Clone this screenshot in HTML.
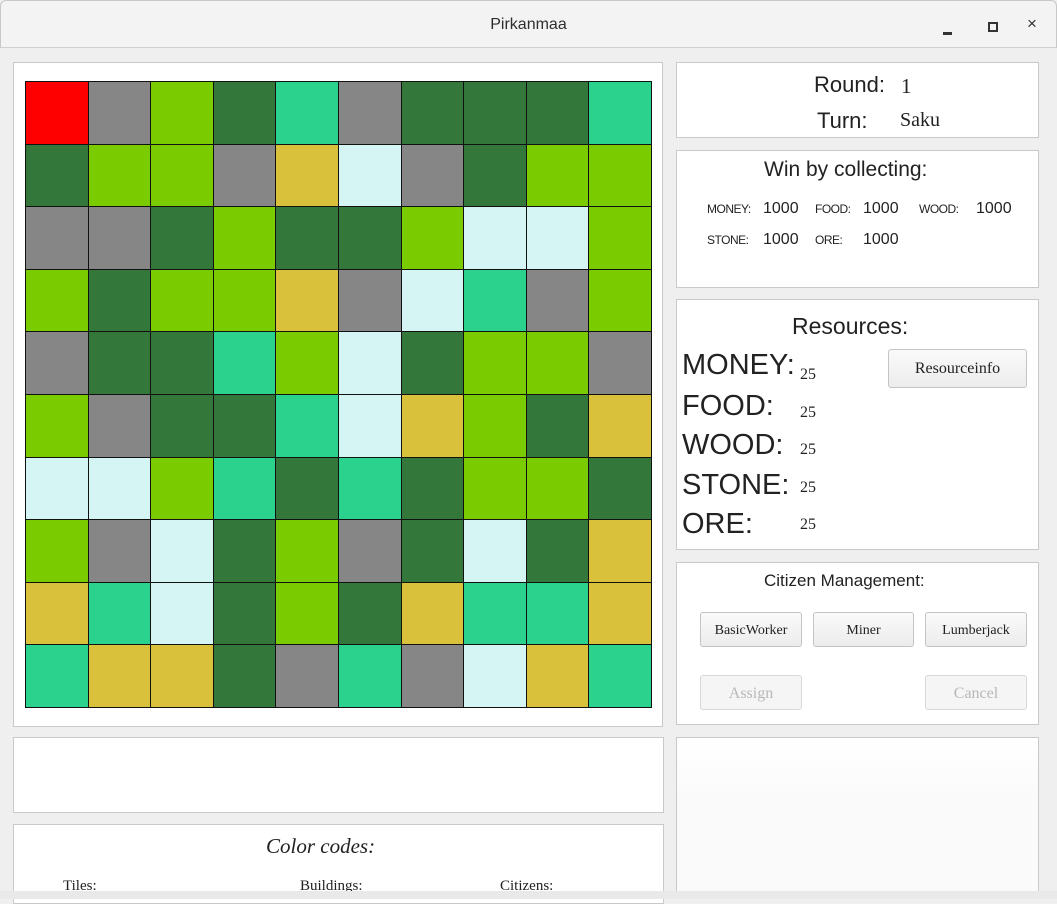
<!DOCTYPE html>
<html><head><meta charset="utf-8"><style>
*{margin:0;padding:0;box-sizing:border-box}
body{width:1057px;height:899px;background:#efefef;position:relative;overflow:hidden;font-family:"Liberation Sans",sans-serif;color:#222}
.title{position:absolute;left:0;top:0;width:1057px;height:48px;background:#f3f3f3;border:1px solid #c8c8c8;border-radius:6px 6px 0 0;border-bottom:1px solid #cfcfcf}
.title .t{position:absolute;left:0;right:0;top:15px;text-align:center;font-size:16px;color:#2e2e2e}
.p{position:absolute;background:#fff;border:1px solid #c9c9c9}
.a{position:absolute;white-space:nowrap}
.s{font-family:"Liberation Serif",serif}
.btn{position:absolute;border:1px solid #c4c4c4;border-radius:3px;background:linear-gradient(#fafafa,#ececec);font-family:"Liberation Serif",serif;font-size:14px;text-align:center;color:#222}
.dis{color:#b8b8b8;background:#f5f5f5;border-color:#d8d8d8}
#g{position:absolute;left:25px;top:81px;width:627px;height:627px;display:grid;grid-template-columns:repeat(10,1fr);grid-template-rows:repeat(10,1fr);border:1px solid #111;background:#111;gap:1px}
.R{background:#ff0000}.G{background:#868686}.L{background:#7acc00}.D{background:#34773a}.T{background:#2ad28e}.Y{background:#d9c13c}.C{background:#d5f5f5}
</style></head><body>
<div class="title"><div class="t">Pirkanmaa</div>
<div class="a" style="left:942px;top:31px;width:9px;height:3px;background:#333"></div>
<div class="a" style="left:987px;top:21px;width:10px;height:10px;border:2px solid #333"></div>
<div class="a" style="left:1026px;top:13px;font-size:17px;color:#333">×</div>
</div>
<div class="p" style="left:13px;top:62px;width:650px;height:665px"></div>
<div id="g">
<div class="R"></div><div class="G"></div><div class="L"></div><div class="D"></div><div class="T"></div><div class="G"></div><div class="D"></div><div class="D"></div><div class="D"></div><div class="T"></div>
<div class="D"></div><div class="L"></div><div class="L"></div><div class="G"></div><div class="Y"></div><div class="C"></div><div class="G"></div><div class="D"></div><div class="L"></div><div class="L"></div>
<div class="G"></div><div class="G"></div><div class="D"></div><div class="L"></div><div class="D"></div><div class="D"></div><div class="L"></div><div class="C"></div><div class="C"></div><div class="L"></div>
<div class="L"></div><div class="D"></div><div class="L"></div><div class="L"></div><div class="Y"></div><div class="G"></div><div class="C"></div><div class="T"></div><div class="G"></div><div class="L"></div>
<div class="G"></div><div class="D"></div><div class="D"></div><div class="T"></div><div class="L"></div><div class="C"></div><div class="D"></div><div class="L"></div><div class="L"></div><div class="G"></div>
<div class="L"></div><div class="G"></div><div class="D"></div><div class="D"></div><div class="T"></div><div class="C"></div><div class="Y"></div><div class="L"></div><div class="D"></div><div class="Y"></div>
<div class="C"></div><div class="C"></div><div class="L"></div><div class="T"></div><div class="D"></div><div class="T"></div><div class="D"></div><div class="L"></div><div class="L"></div><div class="D"></div>
<div class="L"></div><div class="G"></div><div class="C"></div><div class="D"></div><div class="L"></div><div class="G"></div><div class="D"></div><div class="C"></div><div class="D"></div><div class="Y"></div>
<div class="Y"></div><div class="T"></div><div class="C"></div><div class="D"></div><div class="L"></div><div class="D"></div><div class="Y"></div><div class="T"></div><div class="T"></div><div class="Y"></div>
<div class="T"></div><div class="Y"></div><div class="Y"></div><div class="D"></div><div class="G"></div><div class="T"></div><div class="G"></div><div class="C"></div><div class="Y"></div><div class="T"></div>
</div>
<div class="p" style="left:13px;top:737px;width:651px;height:76px"></div>
<div class="p" style="left:13px;top:824px;width:651px;height:80px"></div>
<div class="a s" style="left:266px;top:834px;font-size:21px;font-style:italic">Color codes:</div>
<div class="a s" style="left:63px;top:878px;font-size:15px">Tiles:</div>
<div class="a s" style="left:300px;top:878px;font-size:15px">Buildings:</div>
<div class="a s" style="left:500px;top:878px;font-size:15px">Citizens:</div>

<div class="p" style="left:676px;top:62px;width:363px;height:76px"></div>
<div class="a" style="left:814px;top:72px;font-size:22px">Round:</div>
<div class="a s" style="left:901px;top:74px;font-size:21px">1</div>
<div class="a" style="left:817px;top:108px;font-size:22px">Turn:</div>
<div class="a s" style="left:900px;top:109px;font-size:20px">Saku</div>

<div class="p" style="left:676px;top:150px;width:363px;height:138px"></div>
<div class="a" style="left:764px;top:158px;font-size:21px">Win by collecting:</div>
<div class="a" style="left:707px;top:202px;font-size:12px;letter-spacing:-0.5px">MONEY:</div><div class="a" style="left:763px;top:200px;font-size:16px">1000</div>
<div class="a" style="left:815px;top:202px;font-size:12px;letter-spacing:-0.5px">FOOD:</div><div class="a" style="left:863px;top:200px;font-size:16px">1000</div>
<div class="a" style="left:919px;top:202px;font-size:12px;letter-spacing:-0.5px">WOOD:</div><div class="a" style="left:976px;top:200px;font-size:16px">1000</div>
<div class="a" style="left:707px;top:233px;font-size:12px;letter-spacing:-0.5px">STONE:</div><div class="a" style="left:763px;top:231px;font-size:16px">1000</div>
<div class="a" style="left:815px;top:233px;font-size:12px;letter-spacing:-0.5px">ORE:</div><div class="a" style="left:863px;top:231px;font-size:16px">1000</div>

<div class="p" style="left:676px;top:299px;width:363px;height:251px"></div>
<div class="a" style="left:792px;top:313px;font-size:23px">Resources:</div>
<div class="a" style="left:682px;top:349px;font-size:29px">MONEY:</div>
<div class="a" style="left:682px;top:390px;font-size:29px">FOOD:</div>
<div class="a" style="left:682px;top:429px;font-size:29px">WOOD:</div>
<div class="a" style="left:682px;top:469px;font-size:29px">STONE:</div>
<div class="a" style="left:682px;top:508px;font-size:29px">ORE:</div>
<div class="a s" style="left:800px;top:366px;font-size:16px">25</div>
<div class="a s" style="left:800px;top:404px;font-size:16px">25</div>
<div class="a s" style="left:800px;top:441px;font-size:16px">25</div>
<div class="a s" style="left:800px;top:479px;font-size:16px">25</div>
<div class="a s" style="left:800px;top:516px;font-size:16px">25</div>
<div class="btn" style="left:888px;top:349px;width:139px;height:39px;line-height:37px;font-size:16px">Resourceinfo</div>

<div class="p" style="left:676px;top:562px;width:363px;height:163px"></div>
<div class="a" style="left:764px;top:571px;font-size:17px">Citizen Management:</div>
<div class="btn" style="left:700px;top:612px;width:102px;height:35px;line-height:35px">BasicWorker</div>
<div class="btn" style="left:813px;top:612px;width:101px;height:35px;line-height:35px">Miner</div>
<div class="btn" style="left:925px;top:612px;width:102px;height:35px;line-height:35px">Lumberjack</div>
<div class="btn dis" style="left:700px;top:675px;width:102px;height:35px;line-height:35px;font-size:16px">Assign</div>
<div class="btn dis" style="left:925px;top:675px;width:102px;height:35px;line-height:35px;font-size:16px">Cancel</div>

<div class="p" style="left:676px;top:737px;width:363px;height:160px;background:linear-gradient(#fff,#fafafa 40%)"></div>
<div class="a" style="left:0;top:891px;width:1057px;height:8px;background:#e9e9e9"></div>
</body></html>
